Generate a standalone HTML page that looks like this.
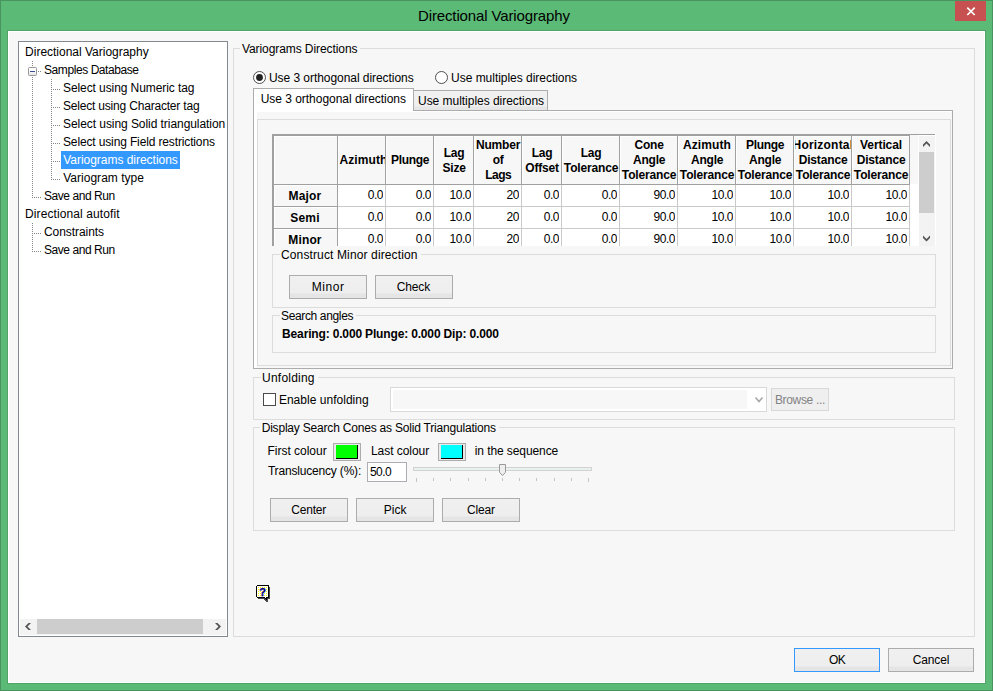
<!DOCTYPE html>
<html lang="en"><head><meta charset="utf-8"><title>Directional Variography</title>
<style>
html,body{margin:0;padding:0}
body{width:993px;height:691px;overflow:hidden;background:#5bba76;font-family:"Liberation Sans", sans-serif;font-size:12px;color:#000;position:relative}
#w div{position:absolute;box-sizing:border-box}
#w .t{white-space:nowrap}
#w svg{position:absolute;overflow:visible}
</style></head>
<body><div id="w">
<div style="left:0px;top:0px;width:993px;height:691px;background:#5bba76;border:1px solid #48935f"></div>
<div style="left:7px;top:30px;width:979px;height:654px;background:#fff;border:1px solid #50a468"></div>
<div style="left:9px;top:32px;width:975px;height:650px;background:#f7f7f7"></div>
<div style="left:955px;top:1px;width:31px;height:20px;background:#c75050"><svg width="31" height="20" viewBox="0 0 31 20"><path d="M12.3 6.6 L19.7 14 M19.7 6.6 L12.3 14" stroke="#fff" stroke-width="1.7" fill="none"/></svg></div>
<div style="left:18px;top:41px;width:210px;height:596px;background:#fff;border:1px solid #828790"></div>
<div style="left:61px;top:151px;width:119px;height:18px;background:#3399ff"></div>
<div style="left:32px;top:61px;width:1px;height:136px;background:repeating-linear-gradient(to bottom,#868686 0 1px,transparent 1px 2px)"></div>
<div style="left:38px;top:71px;width:3px;height:1px;background:repeating-linear-gradient(to right,#868686 0 1px,transparent 1px 2px)"></div>
<div style="left:51px;top:79px;width:1px;height:100px;background:repeating-linear-gradient(to bottom,#868686 0 1px,transparent 1px 2px)"></div>
<div style="left:53px;top:89px;width:7px;height:1px;background:repeating-linear-gradient(to right,#868686 0 1px,transparent 1px 2px)"></div>
<div style="left:53px;top:107px;width:7px;height:1px;background:repeating-linear-gradient(to right,#868686 0 1px,transparent 1px 2px)"></div>
<div style="left:53px;top:125px;width:7px;height:1px;background:repeating-linear-gradient(to right,#868686 0 1px,transparent 1px 2px)"></div>
<div style="left:53px;top:143px;width:7px;height:1px;background:repeating-linear-gradient(to right,#868686 0 1px,transparent 1px 2px)"></div>
<div style="left:53px;top:161px;width:7px;height:1px;background:repeating-linear-gradient(to right,#868686 0 1px,transparent 1px 2px)"></div>
<div style="left:51px;top:179px;width:9px;height:1px;background:repeating-linear-gradient(to right,#868686 0 1px,transparent 1px 2px)"></div>
<div style="left:32px;top:197px;width:9px;height:1px;background:repeating-linear-gradient(to right,#868686 0 1px,transparent 1px 2px)"></div>
<div style="left:32px;top:223px;width:1px;height:28px;background:repeating-linear-gradient(to bottom,#868686 0 1px,transparent 1px 2px)"></div>
<div style="left:34px;top:233px;width:7px;height:1px;background:repeating-linear-gradient(to right,#868686 0 1px,transparent 1px 2px)"></div>
<div style="left:32px;top:251px;width:9px;height:1px;background:repeating-linear-gradient(to right,#868686 0 1px,transparent 1px 2px)"></div>
<div style="left:28px;top:67px;width:9px;height:9px;background:linear-gradient(#fff 40%,#e4e4e4);border:1px solid #969696;border-radius:1.5px"><div style="left:1px;top:3px;width:5px;height:1px;background:#3a4da0"></div></div>
<div style="left:20px;top:619px;width:206px;height:16px;background:#f3f3f3"></div>
<div style="left:37px;top:619px;width:166px;height:15px;background:#cdcdcd"></div>
<div style="left:233px;top:48px;width:742px;height:589px;border:1px solid #dcdcdc"></div>
<div style="left:240.4px;top:48px;width:120px;height:1px;background:#f7f7f7"></div>
<svg style="left:253px;top:71px" width="13" height="13" viewBox="0 0 13 13"><circle cx="6.5" cy="6.5" r="6" fill="#fff" stroke="#3c3c3c" stroke-width="0.9"/><circle cx="6.5" cy="6.5" r="3.4" fill="#222"/></svg>
<svg style="left:435px;top:71px" width="13" height="13" viewBox="0 0 13 13"><circle cx="6.5" cy="6.5" r="6" fill="#fff" stroke="#3c3c3c" stroke-width="0.9"/></svg>
<div style="left:253px;top:110px;width:700px;height:259px;background:#fff;border:1px solid #acacac"></div>
<div style="left:257px;top:112px;width:695px;height:256px;background:#f7f7f7"></div>
<div style="left:413px;top:90px;width:135px;height:21px;background:linear-gradient(#f1f1f1 0,#efefef 15px,#e6e6e6 16px,#e6e6e6 100%);border:1px solid #acacac;border-bottom:none;height:20px"></div>
<div style="left:253px;top:88px;width:161px;height:23px;background:#fff;border:1px solid #acacac;border-bottom:none"></div>
<div style="left:257px;top:119px;width:694px;height:247px;border:1px solid #dcdcdc"></div>
<div style="left:272px;top:134px;width:664px;height:112px;background:#fff"></div>
<div style="left:272px;top:134px;width:663px;height:1px;background:#a0a0a0"></div>
<div style="left:272px;top:135px;width:638px;height:1px;background:#a0a0a0"></div>
<div style="left:272px;top:134px;width:2px;height:112px;background:#a0a0a0"></div>
<div style="left:274px;top:136px;width:644px;height:48px;background:#f7f7f7"></div>
<div style="left:910px;top:135px;width:8px;height:1px;background:#f7f7f7"></div>
<div style="left:274px;top:136px;width:636px;height:1px;background:#fff"></div>
<div style="left:274px;top:184px;width:636px;height:1px;background:#a0a0a0"></div>
<div style="left:337px;top:136px;width:1px;height:49px;background:#a0a0a0"></div>
<div style="left:274px;top:136px;width:1px;height:48px;background:#fff"></div>
<div style="left:385px;top:136px;width:1px;height:49px;background:#a0a0a0"></div>
<div style="left:338px;top:136px;width:1px;height:48px;background:#fff"></div>
<div style="left:339px;top:153.0px;width:46px;height:15px;overflow:hidden;font-weight:bold;line-height:15px;white-space:nowrap"><div style="left:0.5px;top:0px;letter-spacing:0.1px;margin-left:-0.05px">Azimuth</div></div>
<div style="left:433px;top:136px;width:1px;height:49px;background:#a0a0a0"></div>
<div style="left:386px;top:136px;width:1px;height:48px;background:#fff"></div>
<div style="left:387px;top:153.0px;width:46px;height:15px;overflow:hidden;font-weight:bold;line-height:15px;white-space:nowrap"><div style="left:50%;transform:translateX(-50%);top:0px;letter-spacing:-0.3px;margin-left:0.15px">Plunge</div></div>
<div style="left:473px;top:136px;width:1px;height:49px;background:#a0a0a0"></div>
<div style="left:434px;top:136px;width:1px;height:48px;background:#fff"></div>
<div style="left:435px;top:145.5px;width:38px;height:30px;overflow:hidden;font-weight:bold;line-height:15px;white-space:nowrap"><div style="left:50%;transform:translateX(-50%);top:0px;letter-spacing:-0.2px;margin-left:0.1px">Lag</div><div style="left:50%;transform:translateX(-50%);top:15px;letter-spacing:-0.2px;margin-left:0.1px">Size</div></div>
<div style="left:521px;top:136px;width:1px;height:49px;background:#a0a0a0"></div>
<div style="left:474px;top:136px;width:1px;height:48px;background:#fff"></div>
<div style="left:475px;top:138.0px;width:46px;height:45px;overflow:hidden;font-weight:bold;line-height:15px;white-space:nowrap"><div style="left:50%;transform:translateX(-50%);top:0px;letter-spacing:-0.2px;margin-left:0.1px">Number</div><div style="left:50%;transform:translateX(-50%);top:15px;letter-spacing:-0.2px;margin-left:0.1px">of</div><div style="left:50%;transform:translateX(-50%);top:30px;letter-spacing:-0.5px;margin-left:0.25px">Lags</div></div>
<div style="left:561px;top:136px;width:1px;height:49px;background:#a0a0a0"></div>
<div style="left:522px;top:136px;width:1px;height:48px;background:#fff"></div>
<div style="left:523px;top:145.5px;width:38px;height:30px;overflow:hidden;font-weight:bold;line-height:15px;white-space:nowrap"><div style="left:50%;transform:translateX(-50%);top:0px;letter-spacing:-0.2px;margin-left:0.1px">Lag</div><div style="left:50%;transform:translateX(-50%);top:15px;letter-spacing:-0.2px;margin-left:0.1px">Offset</div></div>
<div style="left:619px;top:136px;width:1px;height:49px;background:#a0a0a0"></div>
<div style="left:562px;top:136px;width:1px;height:48px;background:#fff"></div>
<div style="left:563px;top:145.5px;width:56px;height:30px;overflow:hidden;font-weight:bold;line-height:15px;white-space:nowrap"><div style="left:50%;transform:translateX(-50%);top:0px;letter-spacing:-0.2px;margin-left:0.1px">Lag</div><div style="left:50%;transform:translateX(-50%);top:15px;letter-spacing:-0.15px;margin-left:0.075px">Tolerance</div></div>
<div style="left:677px;top:136px;width:1px;height:49px;background:#a0a0a0"></div>
<div style="left:620px;top:136px;width:1px;height:48px;background:#fff"></div>
<div style="left:621px;top:138.0px;width:56px;height:45px;overflow:hidden;font-weight:bold;line-height:15px;white-space:nowrap"><div style="left:50%;transform:translateX(-50%);top:0px;letter-spacing:-0.2px;margin-left:0.1px">Cone</div><div style="left:50%;transform:translateX(-50%);top:15px;letter-spacing:-0.2px;margin-left:0.1px">Angle</div><div style="left:50%;transform:translateX(-50%);top:30px;letter-spacing:-0.15px;margin-left:0.075px">Tolerance</div></div>
<div style="left:735px;top:136px;width:1px;height:49px;background:#a0a0a0"></div>
<div style="left:678px;top:136px;width:1px;height:48px;background:#fff"></div>
<div style="left:679px;top:138.0px;width:56px;height:45px;overflow:hidden;font-weight:bold;line-height:15px;white-space:nowrap"><div style="left:50%;transform:translateX(-50%);top:0px;letter-spacing:0.1px;margin-left:-0.05px">Azimuth</div><div style="left:50%;transform:translateX(-50%);top:15px;letter-spacing:-0.2px;margin-left:0.1px">Angle</div><div style="left:50%;transform:translateX(-50%);top:30px;letter-spacing:-0.15px;margin-left:0.075px">Tolerance</div></div>
<div style="left:793px;top:136px;width:1px;height:49px;background:#a0a0a0"></div>
<div style="left:736px;top:136px;width:1px;height:48px;background:#fff"></div>
<div style="left:737px;top:138.0px;width:56px;height:45px;overflow:hidden;font-weight:bold;line-height:15px;white-space:nowrap"><div style="left:50%;transform:translateX(-50%);top:0px;letter-spacing:-0.3px;margin-left:0.15px">Plunge</div><div style="left:50%;transform:translateX(-50%);top:15px;letter-spacing:-0.2px;margin-left:0.1px">Angle</div><div style="left:50%;transform:translateX(-50%);top:30px;letter-spacing:-0.15px;margin-left:0.075px">Tolerance</div></div>
<div style="left:851px;top:136px;width:1px;height:49px;background:#a0a0a0"></div>
<div style="left:794px;top:136px;width:1px;height:48px;background:#fff"></div>
<div style="left:795px;top:138.0px;width:56px;height:45px;overflow:hidden;font-weight:bold;line-height:15px;white-space:nowrap"><div style="left:50%;transform:translateX(-50%);top:0px;letter-spacing:0.2px;margin-left:-0.1px">Horizontal</div><div style="left:50%;transform:translateX(-50%);top:15px;letter-spacing:-0.15px;margin-left:0.075px">Distance</div><div style="left:50%;transform:translateX(-50%);top:30px;letter-spacing:-0.15px;margin-left:0.075px">Tolerance</div></div>
<div style="left:909px;top:136px;width:1px;height:49px;background:#a0a0a0"></div>
<div style="left:852px;top:136px;width:1px;height:48px;background:#fff"></div>
<div style="left:853px;top:138.0px;width:56px;height:45px;overflow:hidden;font-weight:bold;line-height:15px;white-space:nowrap"><div style="left:50%;transform:translateX(-50%);top:0px;letter-spacing:-0.1px;margin-left:0.05px">Vertical</div><div style="left:50%;transform:translateX(-50%);top:15px;letter-spacing:-0.15px;margin-left:0.075px">Distance</div><div style="left:50%;transform:translateX(-50%);top:30px;letter-spacing:-0.15px;margin-left:0.075px">Tolerance</div></div>
<div style="left:274px;top:185px;width:63px;height:21px;background:#f7f7f7;border-top:1px solid #fff;border-left:1px solid #fff"></div>
<div style="left:274px;top:206px;width:64px;height:1px;background:#a0a0a0"></div>
<div style="left:337px;top:185px;width:1px;height:21px;background:#a0a0a0"></div>
<div style="left:273.5px;top:189px;width:63px;height:16px;overflow:hidden;text-align:center;font-weight:bold;line-height:14px;letter-spacing:0.15px">Major</div>
<div style="left:338px;top:206px;width:572px;height:1px;background:#cacaca"></div>
<div style="left:385px;top:185px;width:1px;height:21px;background:#cacaca"></div>
<div style="left:338px;top:188px;width:45px;height:16px;overflow:hidden;text-align:right;line-height:14px;letter-spacing:-0.45px">0.0</div>
<div style="left:433px;top:185px;width:1px;height:21px;background:#cacaca"></div>
<div style="left:386px;top:188px;width:45px;height:16px;overflow:hidden;text-align:right;line-height:14px;letter-spacing:-0.45px">0.0</div>
<div style="left:473px;top:185px;width:1px;height:21px;background:#cacaca"></div>
<div style="left:434px;top:188px;width:37px;height:16px;overflow:hidden;text-align:right;line-height:14px;letter-spacing:-0.45px">10.0</div>
<div style="left:521px;top:185px;width:1px;height:21px;background:#cacaca"></div>
<div style="left:474px;top:188px;width:45px;height:16px;overflow:hidden;text-align:right;line-height:14px;letter-spacing:-0.45px">20</div>
<div style="left:561px;top:185px;width:1px;height:21px;background:#cacaca"></div>
<div style="left:522px;top:188px;width:37px;height:16px;overflow:hidden;text-align:right;line-height:14px;letter-spacing:-0.45px">0.0</div>
<div style="left:619px;top:185px;width:1px;height:21px;background:#cacaca"></div>
<div style="left:562px;top:188px;width:55px;height:16px;overflow:hidden;text-align:right;line-height:14px;letter-spacing:-0.45px">0.0</div>
<div style="left:677px;top:185px;width:1px;height:21px;background:#cacaca"></div>
<div style="left:620px;top:188px;width:55px;height:16px;overflow:hidden;text-align:right;line-height:14px;letter-spacing:-0.45px">90.0</div>
<div style="left:735px;top:185px;width:1px;height:21px;background:#cacaca"></div>
<div style="left:678px;top:188px;width:55px;height:16px;overflow:hidden;text-align:right;line-height:14px;letter-spacing:-0.45px">10.0</div>
<div style="left:793px;top:185px;width:1px;height:21px;background:#cacaca"></div>
<div style="left:736px;top:188px;width:55px;height:16px;overflow:hidden;text-align:right;line-height:14px;letter-spacing:-0.45px">10.0</div>
<div style="left:851px;top:185px;width:1px;height:21px;background:#cacaca"></div>
<div style="left:794px;top:188px;width:55px;height:16px;overflow:hidden;text-align:right;line-height:14px;letter-spacing:-0.45px">10.0</div>
<div style="left:909px;top:185px;width:1px;height:21px;background:#cacaca"></div>
<div style="left:852px;top:188px;width:55px;height:16px;overflow:hidden;text-align:right;line-height:14px;letter-spacing:-0.45px">10.0</div>
<div style="left:274px;top:207px;width:63px;height:21px;background:#f7f7f7;border-top:1px solid #fff;border-left:1px solid #fff"></div>
<div style="left:274px;top:228px;width:64px;height:1px;background:#a0a0a0"></div>
<div style="left:337px;top:207px;width:1px;height:21px;background:#a0a0a0"></div>
<div style="left:273.5px;top:211px;width:63px;height:16px;overflow:hidden;text-align:center;font-weight:bold;line-height:14px;letter-spacing:0.15px">Semi</div>
<div style="left:338px;top:228px;width:572px;height:1px;background:#cacaca"></div>
<div style="left:385px;top:207px;width:1px;height:21px;background:#cacaca"></div>
<div style="left:338px;top:210px;width:45px;height:16px;overflow:hidden;text-align:right;line-height:14px;letter-spacing:-0.45px">0.0</div>
<div style="left:433px;top:207px;width:1px;height:21px;background:#cacaca"></div>
<div style="left:386px;top:210px;width:45px;height:16px;overflow:hidden;text-align:right;line-height:14px;letter-spacing:-0.45px">0.0</div>
<div style="left:473px;top:207px;width:1px;height:21px;background:#cacaca"></div>
<div style="left:434px;top:210px;width:37px;height:16px;overflow:hidden;text-align:right;line-height:14px;letter-spacing:-0.45px">10.0</div>
<div style="left:521px;top:207px;width:1px;height:21px;background:#cacaca"></div>
<div style="left:474px;top:210px;width:45px;height:16px;overflow:hidden;text-align:right;line-height:14px;letter-spacing:-0.45px">20</div>
<div style="left:561px;top:207px;width:1px;height:21px;background:#cacaca"></div>
<div style="left:522px;top:210px;width:37px;height:16px;overflow:hidden;text-align:right;line-height:14px;letter-spacing:-0.45px">0.0</div>
<div style="left:619px;top:207px;width:1px;height:21px;background:#cacaca"></div>
<div style="left:562px;top:210px;width:55px;height:16px;overflow:hidden;text-align:right;line-height:14px;letter-spacing:-0.45px">0.0</div>
<div style="left:677px;top:207px;width:1px;height:21px;background:#cacaca"></div>
<div style="left:620px;top:210px;width:55px;height:16px;overflow:hidden;text-align:right;line-height:14px;letter-spacing:-0.45px">90.0</div>
<div style="left:735px;top:207px;width:1px;height:21px;background:#cacaca"></div>
<div style="left:678px;top:210px;width:55px;height:16px;overflow:hidden;text-align:right;line-height:14px;letter-spacing:-0.45px">10.0</div>
<div style="left:793px;top:207px;width:1px;height:21px;background:#cacaca"></div>
<div style="left:736px;top:210px;width:55px;height:16px;overflow:hidden;text-align:right;line-height:14px;letter-spacing:-0.45px">10.0</div>
<div style="left:851px;top:207px;width:1px;height:21px;background:#cacaca"></div>
<div style="left:794px;top:210px;width:55px;height:16px;overflow:hidden;text-align:right;line-height:14px;letter-spacing:-0.45px">10.0</div>
<div style="left:909px;top:207px;width:1px;height:21px;background:#cacaca"></div>
<div style="left:852px;top:210px;width:55px;height:16px;overflow:hidden;text-align:right;line-height:14px;letter-spacing:-0.45px">10.0</div>
<div style="left:274px;top:229px;width:63px;height:17px;background:#f7f7f7;border-top:1px solid #fff;border-left:1px solid #fff"></div>
<div style="left:274px;top:246px;width:64px;height:1px;background:#a0a0a0"></div>
<div style="left:337px;top:229px;width:1px;height:17px;background:#a0a0a0"></div>
<div style="left:273.5px;top:233px;width:63px;height:13px;overflow:hidden;text-align:center;font-weight:bold;line-height:14px;letter-spacing:0.15px">Minor</div>
<div style="left:338px;top:246px;width:572px;height:1px;background:#cacaca"></div>
<div style="left:385px;top:229px;width:1px;height:17px;background:#cacaca"></div>
<div style="left:338px;top:232px;width:45px;height:14px;overflow:hidden;text-align:right;line-height:14px;letter-spacing:-0.45px">0.0</div>
<div style="left:433px;top:229px;width:1px;height:17px;background:#cacaca"></div>
<div style="left:386px;top:232px;width:45px;height:14px;overflow:hidden;text-align:right;line-height:14px;letter-spacing:-0.45px">0.0</div>
<div style="left:473px;top:229px;width:1px;height:17px;background:#cacaca"></div>
<div style="left:434px;top:232px;width:37px;height:14px;overflow:hidden;text-align:right;line-height:14px;letter-spacing:-0.45px">10.0</div>
<div style="left:521px;top:229px;width:1px;height:17px;background:#cacaca"></div>
<div style="left:474px;top:232px;width:45px;height:14px;overflow:hidden;text-align:right;line-height:14px;letter-spacing:-0.45px">20</div>
<div style="left:561px;top:229px;width:1px;height:17px;background:#cacaca"></div>
<div style="left:522px;top:232px;width:37px;height:14px;overflow:hidden;text-align:right;line-height:14px;letter-spacing:-0.45px">0.0</div>
<div style="left:619px;top:229px;width:1px;height:17px;background:#cacaca"></div>
<div style="left:562px;top:232px;width:55px;height:14px;overflow:hidden;text-align:right;line-height:14px;letter-spacing:-0.45px">0.0</div>
<div style="left:677px;top:229px;width:1px;height:17px;background:#cacaca"></div>
<div style="left:620px;top:232px;width:55px;height:14px;overflow:hidden;text-align:right;line-height:14px;letter-spacing:-0.45px">90.0</div>
<div style="left:735px;top:229px;width:1px;height:17px;background:#cacaca"></div>
<div style="left:678px;top:232px;width:55px;height:14px;overflow:hidden;text-align:right;line-height:14px;letter-spacing:-0.45px">10.0</div>
<div style="left:793px;top:229px;width:1px;height:17px;background:#cacaca"></div>
<div style="left:736px;top:232px;width:55px;height:14px;overflow:hidden;text-align:right;line-height:14px;letter-spacing:-0.45px">10.0</div>
<div style="left:851px;top:229px;width:1px;height:17px;background:#cacaca"></div>
<div style="left:794px;top:232px;width:55px;height:14px;overflow:hidden;text-align:right;line-height:14px;letter-spacing:-0.45px">10.0</div>
<div style="left:909px;top:229px;width:1px;height:17px;background:#cacaca"></div>
<div style="left:852px;top:232px;width:55px;height:14px;overflow:hidden;text-align:right;line-height:14px;letter-spacing:-0.45px">10.0</div>
<div style="left:918px;top:136px;width:18px;height:110px;background:#fff"></div>
<div style="left:919px;top:136px;width:16px;height:110px;background:#f3f3f3"></div>
<div style="left:919px;top:152px;width:15px;height:61px;background:#cdcdcd"></div>
<div style="left:258px;top:246px;width:692px;height:8px;background:#f7f7f7"></div>
<div style="left:272px;top:254px;width:664px;height:54px;border:1px solid #dcdcdc"></div>
<div style="left:279.5px;top:254px;width:141px;height:1px;background:#f7f7f7"></div>
<div style="left:289px;top:275px;width:78px;height:24px;background:linear-gradient(#f0f0f0 0,#eeeeee 17px,#e5e5e5 18px,#e5e5e5 100%);border:1px solid #acacac"></div>
<div style="left:375px;top:275px;width:78px;height:24px;background:linear-gradient(#f0f0f0 0,#eeeeee 17px,#e5e5e5 18px,#e5e5e5 100%);border:1px solid #acacac"></div>
<div style="left:272px;top:315px;width:664px;height:38px;border:1px solid #dcdcdc"></div>
<div style="left:279.5px;top:315px;width:76.5px;height:1px;background:#f7f7f7"></div>
<div style="left:253px;top:377px;width:702px;height:43px;border:1px solid #dcdcdc"></div>
<div style="left:260.6px;top:377px;width:57px;height:1px;background:#f7f7f7"></div>
<div style="left:263px;top:393px;width:13px;height:13px;background:#fff;border:1px solid #4a4a4a"></div>
<div style="left:390px;top:387px;width:377px;height:25px;background:#fff;border:1px solid #d9d9d9"></div>
<div style="left:393px;top:390px;width:354px;height:19px;background:#f7f7f7"></div>
<svg style="left:753.5px;top:396px" width="10" height="8" viewBox="0 0 10 8"><path d="M1.5 1.5 L5 5.5 L8.5 1.5" stroke="#a8a8a8" stroke-width="1.6" fill="none"/></svg>
<div style="left:771px;top:388px;width:58px;height:23px;background:#efefef;border:1px solid #d9d9d9"></div>
<div style="left:253px;top:427px;width:702px;height:104px;border:1px solid #dcdcdc"></div>
<div style="left:260.2px;top:427px;width:238.5px;height:1px;background:#f7f7f7"></div>
<div style="left:333px;top:443px;width:28px;height:18px;background:#e9e9e9;border:1px solid #acacac"></div>
<div style="left:336px;top:445px;width:22px;height:14px;background:#00ff00;border-right:1px solid #000;border-bottom:1px solid #000"></div>
<div style="left:438px;top:443px;width:28px;height:18px;background:#e9e9e9;border:1px solid #acacac"></div>
<div style="left:441px;top:445px;width:22px;height:14px;background:#00ffff;border-right:1px solid #000;border-bottom:1px solid #000"></div>
<div style="left:367px;top:462px;width:40px;height:20px;background:#fff;border:1px solid #abadb3"></div>
<div style="left:413px;top:467px;width:179px;height:4px;background:#e8f0f0;border:1px solid #d2d2d2"></div>
<div style="left:416px;top:478px;width:1px;height:4px;background:#c4c4c4"></div>
<div style="left:433px;top:478px;width:1px;height:3px;background:#c4c4c4"></div>
<div style="left:450px;top:478px;width:1px;height:3px;background:#c4c4c4"></div>
<div style="left:468px;top:478px;width:1px;height:3px;background:#c4c4c4"></div>
<div style="left:485px;top:478px;width:1px;height:3px;background:#c4c4c4"></div>
<div style="left:502px;top:478px;width:1px;height:3px;background:#c4c4c4"></div>
<div style="left:519px;top:478px;width:1px;height:3px;background:#c4c4c4"></div>
<div style="left:536px;top:478px;width:1px;height:3px;background:#c4c4c4"></div>
<div style="left:554px;top:478px;width:1px;height:3px;background:#c4c4c4"></div>
<div style="left:571px;top:478px;width:1px;height:3px;background:#c4c4c4"></div>
<div style="left:588px;top:478px;width:1px;height:4px;background:#c4c4c4"></div>
<svg style="left:499px;top:464px" width="7" height="13" viewBox="0 0 7 13"><path d="M0.5 0.5 H6.5 V8.3 L3.5 11.6 L0.5 8.3 Z" fill="#eeeeee" stroke="#9a9a9a" stroke-width="1"/></svg>
<div style="left:270px;top:498px;width:78px;height:24px;background:linear-gradient(#f0f0f0 0,#eeeeee 17px,#e5e5e5 18px,#e5e5e5 100%);border:1px solid #acacac"></div>
<div style="left:356px;top:498px;width:78px;height:24px;background:linear-gradient(#f0f0f0 0,#eeeeee 17px,#e5e5e5 18px,#e5e5e5 100%);border:1px solid #acacac"></div>
<div style="left:442px;top:498px;width:78px;height:24px;background:linear-gradient(#f0f0f0 0,#eeeeee 17px,#e5e5e5 18px,#e5e5e5 100%);border:1px solid #acacac"></div>
<svg style="left:255px;top:584px" width="17" height="19" viewBox="0 0 17 19" shape-rendering="crispEdges">
<defs><pattern id="dth" width="2" height="2" patternUnits="userSpaceOnUse"><rect width="2" height="2" fill="#fff"/><rect x="1" y="1" width="1" height="1" fill="#ffff00"/></pattern></defs>
<path d="M3 3 H15 V15 H13 V18 H11 L8 15 H3 Z" fill="#4a4a4a"/>
<path d="M2 1 H13 L14 2 V13 L13 14 H12 V17 L9 14 H2 L1 13 V2 Z" fill="#000"/>
<path d="M2 2 H13 V13 H11 V15 L9 13 H2 Z" fill="url(#dth)"/>
<text x="7.6" y="11.6" font-family="Liberation Sans, sans-serif" font-size="11" font-weight="bold" fill="#00008b" stroke="#00008b" stroke-width="0.4" text-anchor="middle" shape-rendering="auto">?</text></svg>
<div style="left:794px;top:648px;width:86px;height:24px;background:linear-gradient(#f0f0f0 0,#eeeeee 17px,#e5e5e5 18px,#e5e5e5 100%);border:1px solid #3399ff"></div>
<div style="left:888px;top:648px;width:86px;height:24px;background:linear-gradient(#f0f0f0 0,#eeeeee 17px,#e5e5e5 18px,#e5e5e5 100%);border:1px solid #acacac"></div>
<svg style="left:0;top:0" width="993" height="691" viewBox="0 0 993 691"><g fill="#555"><polygon points="28.5,623 25,626.5 28.5,630 31,630 27.5,626.5 31,623"/><polygon points="217.5,623 221,626.5 217.5,630 215,630 218.5,626.5 215,623"/><polygon points="923,144.5 926.5,141 930,144.5 930,147 926.5,143.5 923,147"/><polygon points="923,235.5 926.5,239 930,235.5 930,238 926.5,241.5 923,238"/></g></svg>
<div class="t" style="left:418.0px;top:7px;line-height:17px;font-size:15px;letter-spacing:-0.127px;">Directional Variography</div>
<div class="t" style="left:25.1px;top:45px;line-height:14px;font-size:12px;letter-spacing:-0.011px;">Directional Variography</div>
<div class="t" style="left:44.0px;top:63px;line-height:14px;font-size:12px;letter-spacing:-0.424px;">Samples Database</div>
<div class="t" style="left:63.0px;top:81px;line-height:14px;font-size:12px;letter-spacing:-0.084px;">Select using Numeric tag</div>
<div class="t" style="left:63.0px;top:99px;line-height:14px;font-size:12px;letter-spacing:-0.193px;">Select using Character tag</div>
<div class="t" style="left:63.0px;top:117px;line-height:14px;font-size:12px;letter-spacing:-0.060px;">Select using Solid triangulation</div>
<div class="t" style="left:63.0px;top:135px;line-height:14px;font-size:12px;letter-spacing:-0.138px;">Select using Field restrictions</div>
<div class="t" style="left:63.2px;top:153px;line-height:14px;font-size:12px;letter-spacing:-0.026px;color:#fff;">Variograms directions</div>
<div class="t" style="left:63.2px;top:171px;line-height:14px;font-size:12px;letter-spacing:0.023px;">Variogram type</div>
<div class="t" style="left:44.0px;top:189px;line-height:14px;font-size:12px;letter-spacing:-0.439px;">Save and Run</div>
<div class="t" style="left:25.1px;top:207px;line-height:14px;font-size:12px;letter-spacing:0.099px;">Directional autofit</div>
<div class="t" style="left:44.0px;top:225px;line-height:14px;font-size:12px;letter-spacing:-0.064px;">Constraints</div>
<div class="t" style="left:44.0px;top:243px;line-height:14px;font-size:12px;letter-spacing:-0.439px;">Save and Run</div>
<div class="t" style="left:241.9px;top:42px;line-height:14px;font-size:12px;letter-spacing:-0.074px;">Variograms Directions</div>
<div class="t" style="left:269.0px;top:71px;line-height:14px;font-size:12px;letter-spacing:-0.055px;">Use 3 orthogonal directions</div>
<div class="t" style="left:451.1px;top:71px;line-height:14px;font-size:12px;letter-spacing:-0.030px;">Use multiples directions</div>
<div class="t" style="left:260.7px;top:92px;line-height:14px;font-size:12px;letter-spacing:-0.029px;">Use 3 orthogonal directions</div>
<div class="t" style="left:418.0px;top:94px;line-height:14px;font-size:12px;letter-spacing:-0.030px;">Use multiples directions</div>
<div class="t" style="left:281.0px;top:248px;line-height:14px;font-size:12px;letter-spacing:0.128px;">Construct Minor direction</div>
<div class="t" style="left:311.7px;top:280px;line-height:14px;font-size:12px;letter-spacing:0.557px;">Minor</div>
<div class="t" style="left:396.8px;top:280px;line-height:14px;font-size:12px;letter-spacing:-0.163px;">Check</div>
<div class="t" style="left:281.0px;top:309px;line-height:14px;font-size:12px;letter-spacing:-0.355px;">Search angles</div>
<div class="t" style="left:282.1px;top:327px;line-height:14px;font-size:12px;letter-spacing:-0.158px;font-weight:bold;">Bearing: 0.000 Plunge: 0.000 Dip: 0.000</div>
<div class="t" style="left:262.1px;top:371px;line-height:14px;font-size:12px;letter-spacing:0.211px;">Unfolding</div>
<div class="t" style="left:278.9px;top:393px;line-height:14px;font-size:12px;letter-spacing:0.024px;">Enable unfolding</div>
<div class="t" style="left:774.9px;top:393px;line-height:14px;font-size:12px;letter-spacing:-0.326px;color:#838383;">Browse ...</div>
<div class="t" style="left:261.7px;top:421px;line-height:14px;font-size:12px;letter-spacing:-0.198px;">Display Search Cones as Solid Triangulations</div>
<div class="t" style="left:267.5px;top:444px;line-height:14px;font-size:12px;letter-spacing:-0.020px;">First colour</div>
<div class="t" style="left:371.0px;top:444px;line-height:14px;font-size:12px;letter-spacing:-0.055px;">Last colour</div>
<div class="t" style="left:474.8px;top:444px;line-height:14px;font-size:12px;letter-spacing:-0.089px;">in the sequence</div>
<div class="t" style="left:267.9px;top:464px;line-height:14px;font-size:12px;letter-spacing:-0.179px;">Translucency (%):</div>
<div class="t" style="left:370.0px;top:465px;line-height:14px;font-size:12px;letter-spacing:-0.565px;">50.0</div>
<div class="t" style="left:291.2px;top:503px;line-height:14px;font-size:12px;letter-spacing:-0.172px;">Center</div>
<div class="t" style="left:383.7px;top:503px;line-height:14px;font-size:12px;letter-spacing:0.082px;">Pick</div>
<div class="t" style="left:467.0px;top:503px;line-height:14px;font-size:12px;letter-spacing:-0.177px;">Clear</div>
<div class="t" style="left:829.0px;top:653px;line-height:14px;font-size:12px;letter-spacing:-0.622px;">OK</div>
<div class="t" style="left:912.7px;top:653px;line-height:14px;font-size:12px;letter-spacing:-0.127px;">Cancel</div>
</div></body></html>
